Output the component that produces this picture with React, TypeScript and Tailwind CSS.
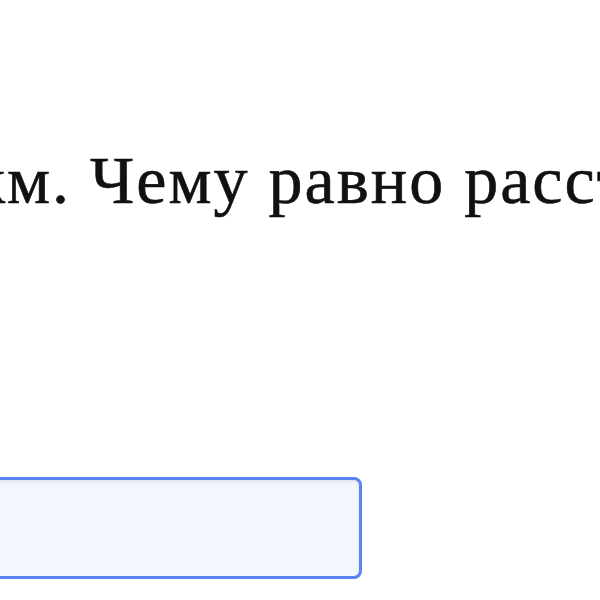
import React from "react";

export default function App() {
  return (
    <div className="w-[600px] h-[600px] overflow-hidden bg-white">
      <p
        className="-ml-[28px] mt-[130px] whitespace-nowrap text-[68px] leading-[100px] tracking-[2px] text-[#111] [-webkit-text-stroke:0.6px_#111]"
        style={{ fontFamily: '"Liberation Serif", "Times New Roman", serif' }}
      >
        км. Чему равно расстояние между городами?
      </p>
      <div className="mt-[247px] -ml-[40px] w-[402px] h-[102px] rounded-[8px] border-[3px] border-[#5a84f4] bg-[#f3f6fe] shadow-[inset_0_2px_3px_rgba(0,0,0,0.08)]" />
    </div>
  );
}
